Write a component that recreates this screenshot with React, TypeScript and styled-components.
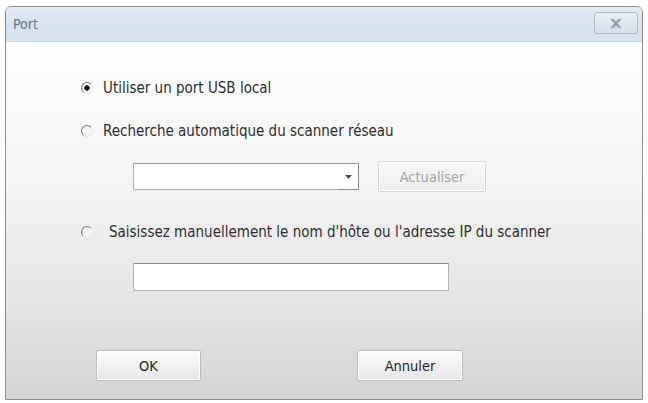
import React from "react";
import styled, { createGlobalStyle } from "styled-components";

const GlobalStyle = createGlobalStyle`
  html, body {
    margin: 0;
    padding: 0;
    background: #ffffff;
  }
  body {
    font-family: "DejaVu Sans Condensed", "DejaVu Sans", "Liberation Sans", sans-serif;
  }
`;

const Page = styled.div`
  width: 648px;
  height: 403px;
  padding: 6px 5px 3px 5px;
  box-sizing: border-box;
`;

const Window = styled.div`
  height: 100%;
  display: flex;
  flex-direction: column;
  border: 1px solid #8d8f92;
  border-radius: 6px 6px 0 0;
  overflow: hidden;
  box-sizing: border-box;
`;

const TitleBar = styled.div`
  height: 34px;
  flex: none;
  display: flex;
  align-items: center;
  justify-content: space-between;
  padding: 0 4px 0 7px;
  background: linear-gradient(#e3ebf4, #d6e2ee 60%, #d9e4ef);
  border-bottom: 1px solid #c9d4de;
`;

const Title = styled.span`
  font-size: 14px;
  color: #6b7681;
`;

const CloseButton = styled.div`
  width: 44px;
  height: 22px;
  margin-top: -2px;
  display: flex;
  align-items: center;
  justify-content: center;
  border: 1px solid #aebbc8;
  border-radius: 3px;
  box-sizing: border-box;
  background: linear-gradient(#e8eef5, #d6e0ea);
`;

const Body = styled.div`
  flex: 1;
  display: flex;
  flex-direction: column;
  padding: 37px 0 0 75px;
  background: linear-gradient(#fefefe, #f4f4f4 40%, #e4e4e4 75%, #d4d4d4);
`;

const OptionRow = styled.label<{ $gap?: number; $top?: number }>`
  display: flex;
  align-items: center;
  height: 18px;
  margin-top: ${({ $top }) => $top ?? 0}px;
  gap: ${({ $gap }) => $gap ?? 10}px;
  font-size: 15px;
  color: #2e2e2e;
`;

const Radio = styled.span<{ $checked?: boolean }>`
  width: 12px;
  height: 12px;
  border-radius: 50%;
  flex: none;
  box-sizing: border-box;
  border: 1.5px solid #7a7a7a;
  border-right-color: #ececec;
  border-bottom-color: #e2e2e2;
  background: radial-gradient(circle at 50% 50%, ${({ $checked }) =>
    $checked ? "#111111 0 2.4px, #f6f6f6 3px" : "#f6f6f6 0"});
`;

const SubRow = styled.div<{ $top: number }>`
  display: flex;
  align-items: center;
  gap: 19px;
  margin: ${({ $top }) => $top}px 0 0 52px;
  height: 31px;
`;

const Combo = styled.div`
  width: 226px;
  height: 27px;
  box-sizing: border-box;
  display: flex;
  justify-content: flex-end;
  align-items: stretch;
  border: 1px solid #b4b4b4;
  border-top-color: #9c9c9c;
  background: #ffffff;
`;

const ComboArrow = styled.div`
  width: 20px;
  display: flex;
  align-items: center;
  justify-content: center;
  border-bottom: 1px solid #8c8c8c;
  border-right: 1px solid #8c8c8c;
  margin: 0 -1px -1px 0;
`;

const PushButton = styled.button<{ $disabled?: boolean; $width: number }>`
  width: ${({ $width }) => $width}px;
  height: 31px;
  padding: 0;
  font-family: inherit;
  font-size: 14.5px;
  color: ${({ $disabled }) => ($disabled ? "#a4a4a4" : "#262626")};
  border: 1px solid ${({ $disabled }) => ($disabled ? "#d6d6d6" : "#bcbcbc")};
  border-radius: 2px;
  background: ${({ $disabled }) =>
    $disabled
      ? "linear-gradient(#f7f7f7, #efefef)"
      : "linear-gradient(#fbfbfb, #f1f1f1 50%, #e7e7e7)"};
  box-shadow: inset 0 0 0 1px #ffffff;
`;

const TextBox = styled.div`
  width: 316px;
  height: 28px;
  margin: 22px 0 0 52px;
  box-sizing: border-box;
  border: 1px solid #b2b2b2;
  border-top-color: #8e8e8e;
  background: #ffffff;
`;

const Footer = styled.div`
  display: flex;
  gap: 156px;
  margin: 59px 0 0 15px;
`;

const CloseIcon = () => (
  <svg width="14" height="11" viewBox="0 0 14 11">
    <path
      d="M1.5 1 L4.5 1 L7 3.6 L9.5 1 L12.5 1 L8.6 5.5 L12.5 10 L9.5 10 L7 7.4 L4.5 10 L1.5 10 L5.4 5.5 Z"
      fill="#8f99a4"
      stroke="#b9c3cd"
      strokeWidth="1"
      strokeLinejoin="round"
    />
  </svg>
);

const ArrowIcon = () => (
  <svg width="7" height="4" viewBox="0 0 7 4">
    <path d="M0 0 H7 L3.5 4 Z" fill="#4a4a4a" />
  </svg>
);

const App: React.FC = () => {
  return (
    <Page>
      <GlobalStyle />
      <Window>
        <TitleBar>
          <Title>Port</Title>
          <CloseButton>
            <CloseIcon />
          </CloseButton>
        </TitleBar>
        <Body>
          <OptionRow>
            <Radio $checked />
            Utiliser un port USB local
          </OptionRow>
          <OptionRow $top={25}>
            <Radio />
            Recherche automatique du scanner réseau
          </OptionRow>
          <SubRow $top={21}>
            <Combo>
              <ComboArrow>
                <ArrowIcon />
              </ComboArrow>
            </Combo>
            <PushButton $disabled $width={108}>
              Actualiser
            </PushButton>
          </SubRow>
          <OptionRow $top={31} $gap={16}>
            <Radio />
            Saisissez manuellement le nom d'hôte ou l'adresse IP du scanner
          </OptionRow>
          <TextBox />
          <Footer>
            <PushButton $width={105}>OK</PushButton>
            <PushButton $width={106}>Annuler</PushButton>
          </Footer>
        </Body>
      </Window>
    </Page>
  );
};

export default App;
